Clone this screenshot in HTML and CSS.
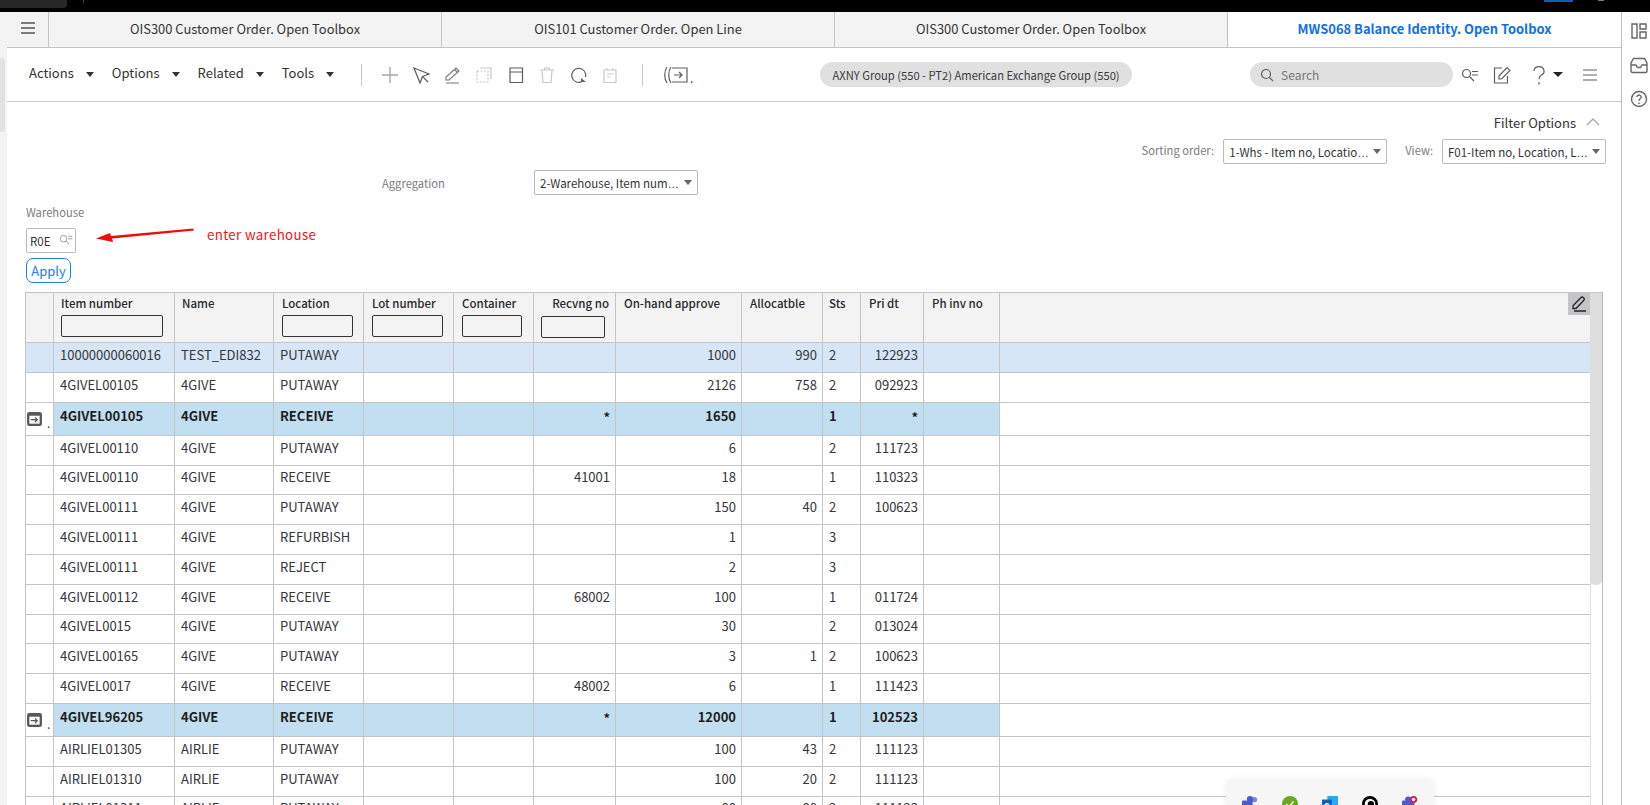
FILE: index.html
```html
<!DOCTYPE html>
<html lang="en">
<head>
<meta charset="utf-8">
<title>MWS068 Balance Identity</title>
<link rel="stylesheet" href="styles.css">
</head>
<body>
<header class="os-bar">
  <span class="os-tab"></span><span class="os-tick"></span>
  <span class="os-blue"></span><span class="os-dot"></span>
</header>
<div class="app">
  <div class="left-strip"><span class="left-thumb"></span></div>
  <main class="main">
    <nav class="tabs">
      <div class="tab tab-menu">
        <svg class="i16" viewBox="0 0 16 16"><path class="s-dark" d="M1 3h14M1 8h14M1 13h14"/></svg>
      </div>
      <div class="tab">OIS300 Customer Order. Open Toolbox</div>
      <div class="tab">OIS101 Customer Order. Open Line</div>
      <div class="tab">OIS300 Customer Order. Open Toolbox</div>
      <div class="tab tab-active">MWS068 Balance Identity. Open Toolbox</div>
    </nav>
    <div class="toolbar">
      <div class="menu"><span>Actions</span><i class="caret"></i></div>
      <div class="menu"><span>Options</span><i class="caret"></i></div>
      <div class="menu"><span>Related</span><i class="caret"></i></div>
      <div class="menu"><span>Tools</span><i class="caret"></i></div>
      <span class="sep sep-a"></span>
      <div class="tool"><svg class="i20" viewBox="0 0 20 20"><path class="s-mid" d="M10 2v16M2 10h16"/></svg></div>
      <div class="tool"><svg class="i20 nudge" viewBox="0 0 20 20"><path class="s-dark2" d="M2 3l15 6-6.500 2.500L8 18zM10.500 11.500L16 17"/></svg></div>
      <div class="tool"><svg class="i20" viewBox="0 0 20 20"><path class="s-thin" d="M3 15v-3L13 3l3 3L6 15zM11.500 4.500l3 3M3 18h13"/></svg></div>
      <div class="tool"><svg class="i20" viewBox="0 0 20 20"><path class="s-dash" d="M3 6h11v11H3z"/><path class="s-light" d="M6 3h11v11"/></svg></div>
      <div class="tool"><svg class="i20" viewBox="0 0 20 20"><path class="s-dark2" d="M4 3h12.500v14.500H4zM4 7h12.500"/></svg></div>
      <div class="tool"><svg class="i20" viewBox="0 0 20 20"><path class="s-light" d="M3 5h14M5 5l1 12.500h8L15 5M7.500 5V3h5v2"/></svg></div>
      <div class="tool"><svg class="i20" viewBox="0 0 20 20"><path class="s-dark2" d="M13 16.500A7 7 0 1 1 16.500 12"/><path class="f-dark" d="M12 13l5 4h-5z"/></svg></div>
      <div class="tool"><svg class="i20" viewBox="0 0 20 20"><path class="s-light" d="M4 5h12v12.500H4zM7 3v2M13 3v2M7 9h6M7 12h3"/></svg></div>
      <span class="sep sep-b"></span>
      <div class="related-btn">
        <svg class="brk" viewBox="0 0 25 18"><path class="s-dark2" d="M4 1C1 5 1 13 4 17M8 1C5 5 5 13 8 17"/><path class="s-dark2" d="M9 2h15v14H9M11 9h8M16 6l3 3-3 3"/></svg>
        <span class="dot">.</span>
      </div>
      <div class="pill">AXNY Group (550 - PT2) American Exchange Group (550)</div>
      <div class="search">
        <svg class="i14" viewBox="0 0 14 14"><circle class="s-dark2" cx="6" cy="6" r="4.500"/><path class="s-dark2" d="M9.500 9.500L13 13"/></svg>
        <span>Search</span>
      </div>
      <svg class="ico-key" viewBox="0 0 18 14"><circle class="s-dark2" cx="5.500" cy="5.500" r="4"/><path class="s-dark2" d="M8.500 8.500L13 13M11 3.500h6M11 7h6"/></svg>
      <svg class="ico-edit" viewBox="0 0 20 20"><path class="s-dark2" d="M10 3H2.500v15h13V11M7 14v-3L15 2.500l3 3L9.500 14z"/></svg>
      <svg class="ico-help" viewBox="0 0 14 20"><path class="s-dark2" d="M2 6a5 4.500 0 1 1 7 4.200c-1.500 1-2 2-2 4M7 17v2.500"/></svg>
      <i class="caret caret-help"></i>
      <svg class="ico-burger" viewBox="0 0 14 12"><path class="s-dark2" d="M0 1h14M0 6h14M0 11h14"/></svg>
    </div>
    <section class="content">
      <div class="filter-head"><span>Filter Options</span>
        <svg class="chev" viewBox="0 0 14 8"><path class="s-mid" d="M1 7l6-6 6 6"/></svg>
      </div>
      <div class="sort-row">
        <label class="lbl">Sorting order:</label>
        <div class="select sel-wide"><span class="sel-text">1-Whs - Item no, Locatio<span class="ell">…</span></span><i class="caret caret-sel"></i></div>
        <label class="lbl lbl-view">View:</label>
        <div class="select sel-wide"><span class="sel-text">F01-Item no, Location, L<span class="ell">…</span></span><i class="caret caret-sel"></i></div>
      </div>
      <div class="agg-row">
        <label class="lbl">Aggregation</label>
        <div class="select sel-agg"><span class="sel-text">2-Warehouse, Item num<span class="ell">…</span></span><i class="caret caret-sel"></i></div>
      </div>
      <div class="wh-label lbl">Warehouse</div>
      <div class="wh-input"><span>R0E</span>
        <svg class="ico-look" viewBox="0 0 18 14"><circle class="s-light2" cx="5.500" cy="5.500" r="4"/><path class="s-light2" d="M8.500 8.500L12 12M11 2.500h5M11 5.500h5"/></svg>
      </div>
      <button class="apply">Apply</button>

      <div class="annotation">
        <svg class="anno-arrow" viewBox="0 0 100 14"><path class="f-red" d="M98 0.500L99 2.500L17 10.500L18 14L1 10.500L15 5L16 8z"/></svg>
        <span class="anno-text">enter warehouse</span>
      </div>

      <div class="table">
        <div class="table-body">
          <div class="row head">
            <div class="th"></div>
            <div class="th th-7"><span>Item number</span><input class="f f-item" aria-label="Item number"></div>
            <div class="th th-7"><span>Name</span></div>
            <div class="th"><span>Location</span><input class="f f-loc" aria-label="Location"></div>
            <div class="th"><span>Lot number</span><input class="f f-loc" aria-label="Lot number"></div>
            <div class="th"><span>Container</span><input class="f f-con" aria-label="Container"></div>
            <div class="th th-r"><span>Recvng no</span><input class="f f-rec" aria-label="Recvng no"></div>
            <div class="th"><span>On-hand approve</span></div>
            <div class="th"><span>Allocatble</span></div>
            <div class="th th-sts"><span>Sts</span></div>
            <div class="th"><span>Pri dt</span></div>
            <div class="th"><span>Ph inv no</span></div>
            <div class="th th-end"></div>
          </div>

          <div class="row sel"><div class="c"></div><div class="c">10000000060016</div><div class="c">TEST_EDI832</div><div class="c">PUTAWAY</div><div class="c"></div><div class="c"></div><div class="c r"></div><div class="c r">1000</div><div class="c r">990</div><div class="c">2</div><div class="c r">122923</div><div class="c"></div><div class="c"></div></div>
          <div class="row"><div class="c"></div><div class="c">4GIVEL00105</div><div class="c">4GIVE</div><div class="c">PUTAWAY</div><div class="c"></div><div class="c"></div><div class="c r"></div><div class="c r">2126</div><div class="c r">758</div><div class="c">2</div><div class="c r">092923</div><div class="c"></div><div class="c"></div></div>
          <div class="row tot"><div class="c c-ico"><svg class="ico-row" viewBox="0 0 16 15"><rect class="f-box" width="16" height="15" rx="2.500"/><path class="f-white" d="M2.500 4h11v8.500h-11z"/><path class="s-box" d="M4 8.200h7M8.500 5.700L11 8.200 8.500 10.700"/></svg><span class="dot">.</span></div><div class="c">4GIVEL00105</div><div class="c">4GIVE</div><div class="c">RECEIVE</div><div class="c"></div><div class="c"></div><div class="c r star">*</div><div class="c r">1650</div><div class="c r"></div><div class="c">1</div><div class="c r star">*</div><div class="c"></div><div class="c plain"></div></div>
          <div class="row"><div class="c"></div><div class="c">4GIVEL00110</div><div class="c">4GIVE</div><div class="c">PUTAWAY</div><div class="c"></div><div class="c"></div><div class="c r"></div><div class="c r">6</div><div class="c r"></div><div class="c">2</div><div class="c r">111723</div><div class="c"></div><div class="c"></div></div>
          <div class="row"><div class="c"></div><div class="c">4GIVEL00110</div><div class="c">4GIVE</div><div class="c">RECEIVE</div><div class="c"></div><div class="c"></div><div class="c r">41001</div><div class="c r">18</div><div class="c r"></div><div class="c">1</div><div class="c r">110323</div><div class="c"></div><div class="c"></div></div>
          <div class="row"><div class="c"></div><div class="c">4GIVEL00111</div><div class="c">4GIVE</div><div class="c">PUTAWAY</div><div class="c"></div><div class="c"></div><div class="c r"></div><div class="c r">150</div><div class="c r">40</div><div class="c">2</div><div class="c r">100623</div><div class="c"></div><div class="c"></div></div>
          <div class="row"><div class="c"></div><div class="c">4GIVEL00111</div><div class="c">4GIVE</div><div class="c">REFURBISH</div><div class="c"></div><div class="c"></div><div class="c r"></div><div class="c r">1</div><div class="c r"></div><div class="c">3</div><div class="c r"></div><div class="c"></div><div class="c"></div></div>
          <div class="row"><div class="c"></div><div class="c">4GIVEL00111</div><div class="c">4GIVE</div><div class="c">REJECT</div><div class="c"></div><div class="c"></div><div class="c r"></div><div class="c r">2</div><div class="c r"></div><div class="c">3</div><div class="c r"></div><div class="c"></div><div class="c"></div></div>
          <div class="row"><div class="c"></div><div class="c">4GIVEL00112</div><div class="c">4GIVE</div><div class="c">RECEIVE</div><div class="c"></div><div class="c"></div><div class="c r">68002</div><div class="c r">100</div><div class="c r"></div><div class="c">1</div><div class="c r">011724</div><div class="c"></div><div class="c"></div></div>
          <div class="row"><div class="c"></div><div class="c">4GIVEL0015</div><div class="c">4GIVE</div><div class="c">PUTAWAY</div><div class="c"></div><div class="c"></div><div class="c r"></div><div class="c r">30</div><div class="c r"></div><div class="c">2</div><div class="c r">013024</div><div class="c"></div><div class="c"></div></div>
          <div class="row"><div class="c"></div><div class="c">4GIVEL00165</div><div class="c">4GIVE</div><div class="c">PUTAWAY</div><div class="c"></div><div class="c"></div><div class="c r"></div><div class="c r">3</div><div class="c r">1</div><div class="c">2</div><div class="c r">100623</div><div class="c"></div><div class="c"></div></div>
          <div class="row"><div class="c"></div><div class="c">4GIVEL0017</div><div class="c">4GIVE</div><div class="c">RECEIVE</div><div class="c"></div><div class="c"></div><div class="c r">48002</div><div class="c r">6</div><div class="c r"></div><div class="c">1</div><div class="c r">111423</div><div class="c"></div><div class="c"></div></div>
          <div class="row tot"><div class="c c-ico"><svg class="ico-row" viewBox="0 0 16 15"><rect class="f-box" width="16" height="15" rx="2.500"/><path class="f-white" d="M2.500 4h11v8.500h-11z"/><path class="s-box" d="M4 8.200h7M8.500 5.700L11 8.200 8.500 10.700"/></svg><span class="dot">.</span></div><div class="c">4GIVEL96205</div><div class="c">4GIVE</div><div class="c">RECEIVE</div><div class="c"></div><div class="c"></div><div class="c r star">*</div><div class="c r">12000</div><div class="c r"></div><div class="c">1</div><div class="c r">102523</div><div class="c"></div><div class="c plain"></div></div>
          <div class="row"><div class="c"></div><div class="c">AIRLIEL01305</div><div class="c">AIRLIE</div><div class="c">PUTAWAY</div><div class="c"></div><div class="c"></div><div class="c r"></div><div class="c r">100</div><div class="c r">43</div><div class="c">2</div><div class="c r">111123</div><div class="c"></div><div class="c"></div></div>
          <div class="row"><div class="c"></div><div class="c">AIRLIEL01310</div><div class="c">AIRLIE</div><div class="c">PUTAWAY</div><div class="c"></div><div class="c"></div><div class="c r"></div><div class="c r">100</div><div class="c r">20</div><div class="c">2</div><div class="c r">111123</div><div class="c"></div><div class="c"></div></div>
          <div class="row"><div class="c"></div><div class="c">AIRLIEL01311</div><div class="c">AIRLIE</div><div class="c">PUTAWAY</div><div class="c"></div><div class="c"></div><div class="c r"></div><div class="c r">80</div><div class="c r">80</div><div class="c">2</div><div class="c r">111123</div><div class="c"></div><div class="c"></div></div>
        </div>
        <div class="scroll"><span class="thumb"></span></div>
        <div class="edit-btn"><svg class="i16" viewBox="0 0 16 16"><path class="s-black" d="M2 12.500v-2.800L10 1.500a1.500 1.500 0 0 1 2.200 0l.6.6a1.500 1.500 0 0 1 0 2.200L5 12.500zM3 15h12"/></svg></div>
      </div>
    </section>
  </main>
  <aside class="side">
    <svg class="i18" viewBox="0 0 18 18"><path class="s-side" d="M2 2h5v14H2zM10 2h6v5h-6zM10 10h6v6h-6z"/></svg>
    <svg class="i18" viewBox="0 0 18 18"><path class="s-side" d="M3.500 2.500h11L17 7v8a1.500 1.500 0 0 1-1.500 1.500h-13A1.500 1.500 0 0 1 1 15V7zM1 9h5l1.500 2.500h3L12 9h5"/></svg>
    <svg class="i18" viewBox="0 0 18 18"><circle class="s-side" cx="9" cy="9" r="7.500"/><path class="s-side" d="M6.800 7a2.200 2 0 1 1 3.400 1.700C9.300 9.300 9 9.800 9 10.800M9 12.500v1.500"/></svg>
  </aside>
</div>
<div class="tray">
  <svg class="tray-i" viewBox="0 0 18 18"><circle class="f-teams" cx="14" cy="4" r="3"/><circle class="f-teams2" cx="9" cy="3.500" r="3.500"/><rect class="f-teams2" y="5" width="12" height="13" rx="1"/></svg>
  <svg class="tray-i" viewBox="0 0 18 18"><circle class="f-green" cx="9" cy="9" r="9"/><path class="s-white" d="M5 9l3 3 5-6"/></svg>
  <svg class="tray-i" viewBox="0 0 18 18"><rect class="f-out2" x="6" width="12" height="14"/><rect class="f-out" y="4" width="11" height="14"/><circle class="f-white" cx="5.500" cy="11" r="3"/><circle class="f-out" cx="5.500" cy="11" r="1.500"/></svg>
  <svg class="tray-i" viewBox="0 0 18 18"><circle class="s-ring" cx="9" cy="9" r="7.500"/><circle class="f-black" cx="10" cy="9" r="3.500"/></svg>
  <svg class="tray-i" viewBox="0 0 18 18"><circle class="f-teams2" cx="7" cy="4" r="3.500"/><rect class="f-teams2" y="5" width="14" height="13" rx="1"/><circle class="f-badge" cx="13" cy="4" r="4"/><circle class="f-white" cx="13" cy="4" r="2"/></svg>
</div>
</body>
</html>
```

FILE: styles.css
```css
* { box-sizing: border-box; }
html, body { margin: 0; height: 805px; overflow: hidden; background: #fff; }
body {
  position: relative;
  font-family: "Noto Sans CJK SC", "Noto Sans", sans-serif;
  font-size: 13px;
  color: #2c2c30;
}
svg { display: block; fill: none; }

/* icon paint */
.s-dark { stroke: #555; stroke-width: 1.3; }
.s-dark2 { stroke: #5e5e62; stroke-width: 1.2; }
.s-thin { stroke: #77777b; stroke-width: 1.1; }
.s-mid { stroke: #a9a9ad; stroke-width: 1.4; }
.s-light { stroke: #c8c8cc; stroke-width: 1.2; }
.s-light2 { stroke: #8f8f93; stroke-width: 1; }
.s-dash { stroke: #c8c8cc; stroke-width: 1.2; stroke-dasharray: 2 1.5; }
.s-black { stroke: #222; stroke-width: 1.3; }
.s-side { stroke: #66666a; stroke-width: 1.4; }
.s-box { stroke: #555; stroke-width: 1.3; }
.s-white { stroke: #fff; stroke-width: 1.6; }
.s-ring { stroke: #000; stroke-width: 3; }
.f-dark { fill: #5e5e62; }
.f-black { fill: #000; }
.f-red { fill: #f00a0a; }
.f-box { fill: #59595c; }
.f-white { fill: #fff; }
.f-teams { fill: #7b83eb; }
.f-teams2 { fill: #5059c9; }
.f-green { fill: #6aa820; }
.f-out { fill: #0b63b8; }
.f-out2 { fill: #28a8ea; }
.f-badge { fill: #d9184a; }
.i14 { width: 14px; height: 14px; flex: none; }
.i16 { width: 16px; height: 16px; }
.i18 { width: 18px; height: 18px; }
.i20 { width: 20px; height: 20px; }
.nudge { margin-left: 2px; }

/* top OS strip */
.os-bar { height: 12px; background: #000; position: relative; }
.os-tab { position: absolute; left: 0; top: 0; width: 67px; height: 8px; background: #262626; border-bottom-right-radius: 4px; }
.os-tick { position: absolute; left: 83px; top: 0; width: 1px; height: 3px; background: #444; }
.os-blue { position: absolute; left: 1544px; top: 0; width: 29px; height: 2px; background: #0f5cad; }
.os-dot { position: absolute; left: 1598px; top: 0; width: 6px; height: 1px; background: #777; }

.app { display: flex; height: 793px; }
.left-strip { width: 7px; background: #f3f3f3; flex: none; }
.left-thumb { display: block; width: 5px; height: 74px; margin-top: 46px; background: #e2e2e2; border-radius: 0 3px 3px 0; }
.main { width: 1614px; flex: none; display: flex; flex-direction: column; min-width: 0; }
.side {
  flex: 1; border-left: 1px solid #bdbdbd;
  display: flex; flex-direction: column; align-items: center;
  padding-top: 10px; padding-left: 6px; gap: 15px;
}
.side svg:nth-child(2) { margin-top: 1px; }
.side svg:nth-child(3) { margin-top: 1px; }

/* tabs */
.tabs { display: flex; height: 36px; flex: none; background: #f3f3f3; border-bottom: 1px solid #c5c5c8; }
.tab {
  width: 393px; border-right: 1px solid #c5c5c8;
  display: flex; align-items: center; justify-content: center;
  font-size: 12.9px; color: #333;
  padding-bottom: 3px;
}
.tab-menu { width: 42px; flex: none; }
.tab-active { flex: 1; border-right: 0; background: #fff; color: #0f6fe8; font-weight: 700; }

/* toolbar */
.toolbar {
  display: flex; align-items: center; height: 54px; flex: none;
  border-bottom: 1px solid #c5c5c8; padding-left: 22px;
}
.menu { display: flex; align-items: center; margin-right: 18px; font-size: 13px; color: #333; padding-bottom: 4px; }
.caret { display: block; width: 0; height: 0; border-left: 4.5px solid transparent; border-right: 4.5px solid transparent; border-top: 5px solid #333; margin-left: 12px; margin-top: 3px; }
.sep { width: 1px; height: 22px; background: #c5c5c8; flex: none; }
.sep-a { margin-left: 9px; margin-right: 12px; }
.sep-b { margin-left: 16px; margin-right: 20px; }
.tool { width: 31.5px; display: flex; justify-content: center; flex: none; }
.related-btn { display: flex; align-items: center; gap: 2px; width: 30px; flex: none; }
.brk { width: 25px; height: 18px; flex: none; }
.dot { font-size: 12px; line-height: 1; margin-top: 6px; color: #444; }
.pill {
  margin-left: 127px; width: 312px; height: 25px; border-radius: 13px; flex: none;
  background: #e0e0e0; display: flex; align-items: center; justify-content: center;
  font-size: 11.2px; color: #3a3a3e; white-space: nowrap;
}
.search {
  margin-left: 118px; width: 203px; height: 25px; border-radius: 13px; flex: none;
  background: #e0e0e0; display: flex; align-items: center; gap: 7px; padding-left: 10px;
  font-size: 12px; color: #777;
}
.ico-key { width: 18px; height: 14px; margin-left: 8px; flex: none; }
.ico-edit { width: 20px; height: 20px; margin-left: 13px; flex: none; }
.ico-help { width: 14px; height: 20px; margin-left: 20px; flex: none; }
.caret-help { margin-left: 7px; margin-top: 0; border-top-color: #222; border-left-width: 5px; border-right-width: 5px; }
.ico-burger { width: 14px; height: 12px; margin-left: 20px; flex: none; }

/* filters */
.content { position: relative; flex: 1; display: flex; flex-direction: column; min-height: 0; }
.filter-head { display: flex; justify-content: flex-end; align-items: center; height: 20px; margin-top: 10px; padding-right: 21px; font-size: 13px; color: #333; }
.chev { width: 14px; height: 8px; margin-left: 10px; }
.sort-row { display: flex; justify-content: flex-end; align-items: center; margin-top: 7px; padding-right: 15px; }
.sort-row .lbl { padding-bottom: 3px; }
.lbl { font-size: 11.2px; color: #7b7b80; }
.lbl-view { margin-left: 18px; }
.select {
  display: flex; align-items: center; height: 25px; background: #fff;
  border: 1px solid #b9b9bc; border-radius: 2px; padding: 0 5px 0 5px;
  font-size: 11.5px; color: #333; margin-left: 9px;
}
.sel-wide { width: 164px; }
.sel-agg { width: 164px; margin-left: 0; }
.sel-text { flex: 1; min-width: 0; white-space: nowrap; }
.ell { font-family: "Liberation Sans", sans-serif; }
.caret-sel { margin-left: 2px; margin-top: 0; border-top-color: #666; border-left-width: 4.5px; border-right-width: 4.5px; flex: none; }
.agg-row { display: flex; align-items: center; margin-top: 6px; padding-left: 375px; }
.agg-row .lbl { width: 152px; }
.wh-label { margin-top: 8px; margin-left: 19px; line-height: 18px; }
.wh-input {
  margin-top: 7px; margin-left: 19px; width: 50px; height: 25px;
  border: 1px solid #b9b9bc; border-radius: 2px; display: flex; align-items: center;
  justify-content: space-between; padding: 0 1px 0 3px; font-size: 11.5px; color: #333;
}
.ico-look { width: 15px; height: 12px; margin-top: -2px; }
.apply {
  align-self: flex-start; margin: 5px 0 0 19px; width: 45px; height: 25px; padding: 0;
  background: #fff; border: 1px solid #1c7ce8; border-radius: 7px;
  font: inherit; font-size: 13px; color: #1c7ce8;
}
.annotation { position: absolute; left: 88px; top: 126px; width: 240px; }
.anno-arrow { position: absolute; left: 0; top: 0; width: 100px; height: 14px; }
.anno-text { position: absolute; left: 112px; top: -3px; color: #f01414; font-size: 13.3px; letter-spacing: .35px; white-space: nowrap; }

/* table */
.table {
  position: relative; display: flex; margin: 9px 0 0 18px; width: 1578px; flex: 1; min-height: 0;
  border: 1px solid #c5c5c8; border-bottom: 0; border-right: 1px solid #bbb; overflow: hidden;
}
.table-body { flex: 1; min-width: 0; }
.row {
  display: grid;
  grid-template-columns: 28px 121px 99px 90px 90px 80px 82px 126px 81px 38px 63px 76px 1fr;
  height: 29.8px; border-bottom: 1px solid #c5c5c8;
  font-size: 13px; color: #35353a;
}
.head { height: 50px; background: #f3f3f3; color: #28282c; font-size: 11.5px; font-weight: 500; }
.sel { background: #d6e6f6; height: 30px; }
.tot { height: 33px; font-weight: 700; color: #1e1e22; }
.tot .c { background: #c2dff1; }
.tot .c-ico { background: #fff; justify-content: flex-start; padding: 0; }
.tot .plain { background: #fff; }
.th { border-right: 1px solid #c5c5c8; padding: 1px 0 0 8px; display: flex; flex-direction: column; align-items: flex-start; min-width: 0; }
.th span { line-height: 18px; white-space: nowrap; }
.th-7 { padding-left: 7px; }
.th-r { align-items: flex-end; padding: 1px 6px 0 0; }
.th-sts { padding-left: 6px; }
.th-end { border-right: 0; }
.f { height: 22px; margin: 3px 0 0 0; background: transparent; border: 1px solid #333; border-radius: 2px; padding: 0; flex: none; }
.f-item { width: 102px; }
.f-loc { width: 71px; }
.f-con { width: 60px; }
.f-rec { width: 64px; margin-right: 4px; margin-top: 4px; }
.c {
  display: flex; align-items: center; border-right: 1px solid #c5c5c8;
  padding: 0 5px 6px 6px; white-space: nowrap; min-width: 0; overflow: hidden;
}
.c:last-child { border-right: 0; }
.r { justify-content: flex-end; }
.star { align-items: flex-start; padding-top: 4px; }
.ico-row { width: 15px; height: 14px; flex: none; margin-left: 1px; }
.c-ico .dot { margin-left: 5px; margin-top: 8px; font-weight: 400; }
.scroll { position: relative; width: 12px; flex: none; border-left: 1px solid #e2e2e2; }
.thumb { display: block; width: 12px; height: 292px; margin-left: -1px; background: #dedede; border-radius: 0 0 5px 5px; }
.edit-btn { position: absolute; right: 12px; top: 0; width: 22px; height: 22px; background: #c5c5c9; display: flex; align-items: center; justify-content: center; }

/* floating tray */
.tray {
  position: absolute; left: 1226px; top: 779px; width: 208px; height: 26px;
  background: #f6f6f6; border-radius: 8px 8px 0 0; box-shadow: 0 0 6px rgba(0,0,0,.08);
  display: flex; gap: 24px; padding: 17px 0 0 16px; overflow: hidden;
}
.tray-i { width: 16px; height: 16px; flex: none; }
```
